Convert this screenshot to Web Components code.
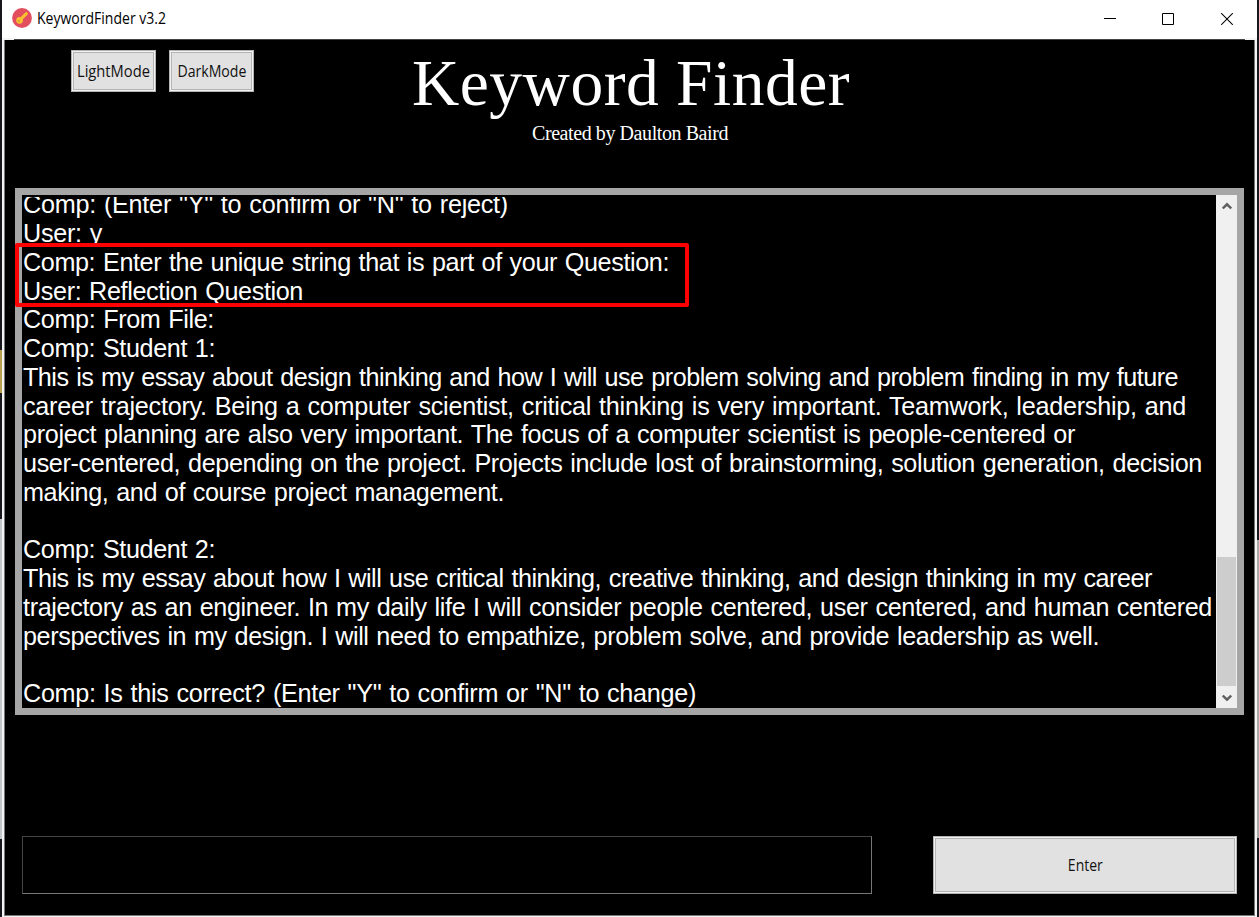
<!DOCTYPE html>
<html lang="en"><head><meta charset="utf-8"><title>KeywordFinder v3.2</title>
<style>html,body{margin:0;width:1259px;height:917px;overflow:hidden;background:#17181b}</style></head>
<body>
<kf-window></kf-window>
<script>
const define = (name, html, setup) => customElements.define(name, class extends HTMLElement {
  constructor(){ super(); this.attachShadow({mode:'open'}).innerHTML = html; }
  connectedCallback(){ if (setup) setup(this); }
});

// Single line of text fitted to the width given in "w":
// by letter spacing, or by condensing the glyphs when "squeeze" is set
define('kf-line', `<style>
:host{display:block;white-space:pre}
span{display:inline-block}
:host([squeeze=left]) span{transform-origin:0 50%}
</style><span><slot></slot></span>`, el => {
  const w = +el.getAttribute('w');
  if (!w) return;
  const s = el.shadowRoot.querySelector('span');
  const natural = s.getBoundingClientRect().width;
  if (el.hasAttribute('squeeze')) s.style.transform = 'scaleX(' + w / natural + ')';
  else s.style.letterSpacing = (w - natural) / el.textContent.length + 'px';
});

define('kf-button', `<style>
:host{display:block;box-sizing:border-box;border:1px solid #b4b4b4;background:#f2f2f2;padding:1px}
div{box-sizing:border-box;height:100%;border:1px solid #b5b5b5;background:#e1e1e1;display:flex;align-items:center;justify-content:center;color:#111;font:15.5px/20px "Open Sans","Noto Sans",sans-serif}
</style><div><slot></slot></div>`);

define('kf-titlebar', `<style>
:host{display:flex;height:38px;background:#fff;align-items:center;box-sizing:border-box;padding:0 23px 2px 10px;color:#000;font:15.5px/20px "Open Sans","Noto Sans",sans-serif}
.t{margin-left:5px;flex:1}
.c{display:flex;gap:46px;padding-top:1px}
svg{display:block}
</style>
<svg width="20" height="20" viewBox="0 0 20 20"><circle cx="10" cy="10" r="9.9" fill="#e34e5f"/><path d="M8.5 11.3 14.4 5.6" stroke="#f9bf32" stroke-width="3" fill="none" stroke-linecap="round"/><circle cx="7.6" cy="12.3" r="3.4" fill="#f9bf32"/><circle cx="6.8" cy="13.1" r=".8" fill="#c98a34"/></svg>
<kf-line class="t" w="129" squeeze="left">KeywordFinder v3.2</kf-line>
<div class="c">
<svg width="12" height="12" viewBox="0 0 12 12"><path d="M0 5.5H12" stroke="#000"/></svg>
<svg width="12" height="12" viewBox="0 0 12 12"><path d="M.5.5h11v11H.5z" stroke="#000" fill="none"/></svg>
<svg width="14" height="12" viewBox="0 0 14 12"><path d="M1.2.2 12.8 11.8M12.8.2 1.2 11.8" stroke="#000" stroke-width="1.1"/></svg>
</div>`);

define('kf-scrollbar', `<style>
:host{display:flex;flex-direction:column;width:21px;background:#f0f0f0;align-items:center;box-sizing:border-box}
.a{height:22px;display:flex;align-items:center}
.track{flex:1}
.thumb{width:19px;height:129px;background:#cdcdcd}
</style>
<div class="a"><svg width="10" height="8" viewBox="0 0 10 8"><path d="M.8 6.5 5 2.3 9.2 6.5" fill="none" stroke="#606060" stroke-width="2.4"/></svg></div>
<div class="track"></div><div class="thumb"></div>
<div class="a"><svg width="10" height="8" viewBox="0 0 10 8"><path d="M.8 2.5 5 6.7 9.2 2.5" fill="none" stroke="#606060" stroke-width="2.4"/></svg></div>`);

define('kf-log', `<style>
:host{display:flex;position:relative;box-sizing:border-box;height:527px;border:7px solid #a6a6a6;background:#000;color:#fff}
.text{flex:1;min-width:0;overflow:hidden;display:flex;flex-direction:column;justify-content:flex-end;border-top:2px solid #000;padding:0 0 .3px 1px;font:25.2px/28.74px "Liberation Sans",Arial,sans-serif;word-spacing:1.2px}
kf-line{height:28.74px;flex:none}
.mark{position:absolute;left:-7px;top:48px;width:674px;height:64px;box-sizing:border-box;border:4px solid #f00;border-radius:2px}
</style>
<div class="text">
<kf-line w="485">Comp: (Enter "Y" to confirm or "N" to reject)</kf-line>
<kf-line w="79">User: y</kf-line>
<kf-line w="646">Comp: Enter the unique string that is part of your Question:</kf-line>
<kf-line w="280">User: Reflection Question</kf-line>
<kf-line w="191">Comp: From File:</kf-line>
<kf-line w="192">Comp: Student 1:</kf-line>
<kf-line w="1155">This is my essay about design thinking and how I will use problem solving and problem finding in my future</kf-line>
<kf-line w="1163">career trajectory. Being a computer scientist, critical thinking is very important. Teamwork, leadership, and</kf-line>
<kf-line w="1052">project planning are also very important. The focus of a computer scientist is people-centered or</kf-line>
<kf-line w="1179">user-centered, depending on the project. Projects include lost of brainstorming, solution generation, decision</kf-line>
<kf-line w="481">making, and of course project management.</kf-line>
<kf-line></kf-line>
<kf-line w="192">Comp: Student 2:</kf-line>
<kf-line w="1129">This is my essay about how I will use critical thinking, creative thinking, and design thinking in my career</kf-line>
<kf-line w="1189">trajectory as an engineer. In my daily life I will consider people centered, user centered, and human centered</kf-line>
<kf-line w="1076">perspectives in my design. I will need to empathize, problem solve, and provide leadership as well.</kf-line>
<kf-line></kf-line>
<kf-line w="673">Comp: Is this correct? (Enter "Y" to confirm or "N" to change)</kf-line>
</div>
<kf-scrollbar></kf-scrollbar>
<div class="mark"></div>`);

define('kf-window', `<style>
:host{display:grid;grid-template-columns:2px 1255px 2px;height:917px}
.edge{background:linear-gradient(#17181b 350px,#b9a04e 350px 393px,#17181b 393px 519px,#c3c7c9 519px 839px,#17181b 839px)}
.edge.r{background:linear-gradient(#17181b 540px,#a9a9a7 540px 838px,#17181b 838px)}
.win{display:flex;flex-direction:column;background:#f4f4f4}
.step{height:2px;margin:0 12px;background:linear-gradient(#fff 1px,#444 1px)}
.body{flex:1;margin:0 2px 1px;border:1px solid #777;border-top:0;background:#000;box-sizing:border-box;padding:10px 10px 0 10px;display:flex;flex-direction:column}
.head{display:grid;grid-template-columns:397px 438px 1fr;height:138px}
.modes{display:flex;gap:12px;padding-left:56px}
.modes kf-button{width:85px;height:42px}
.modes kf-button+kf-button{margin-left:1px}
.titles{color:#fff;font-family:"Liberation Serif","Times New Roman",serif}
h1{margin:-4px 0 0;font-weight:400;font-size:65.5px;line-height:74px;height:74px}
.by{font-size:20px;line-height:24px;margin:1px 0 0 120px}
.form{display:flex;justify-content:space-between;margin:121px 7px 0 7px}
.in{width:850px;height:58px;box-sizing:border-box;border:1px solid #444;border-bottom-color:#777;border-right-color:#777}
.form kf-button{width:304px;height:58px}
</style>
<div class="edge"></div>
<div class="win"><kf-titlebar></kf-titlebar><div class="step"></div>
<div class="body">
<div class="head"><div class="modes"><kf-button><kf-line w="73" squeeze>LightMode</kf-line></kf-button><kf-button><kf-line w="69" squeeze>DarkMode</kf-line></kf-button></div>
<div class="titles"><h1><kf-line w="438">Keyword Finder</kf-line></h1><kf-line class="by" w="196">Created by Daulton Baird</kf-line></div><div></div></div>
<kf-log></kf-log>
<div class="form"><div class="in"></div><kf-button><kf-line w="35" squeeze>Enter</kf-line></kf-button></div>
</div></div>
<div class="edge r"></div>`);
</script>
</body></html>
